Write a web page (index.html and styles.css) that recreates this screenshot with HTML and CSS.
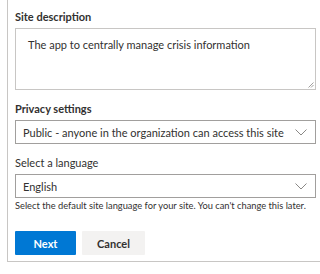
FILE: index.html
```html
<!DOCTYPE html>
<html lang="en">
<head>
    <meta charset="UTF-8">
    <title>Create site</title>
    <link rel="stylesheet" href="styles.css">
</head>
<body>
    <div class="panel">
        <div class="field">
            <label class="label strong" for="desc">Site description</label>
            <div class="textarea" id="desc">
                The app to centrally manage crisis information
                <svg class="grip" width="6" height="6" viewBox="0 0 6 6">
                    <path d="M5.5 0.5 L0.5 5.5 M5.5 3 L3 5.5" stroke="#8a8886" stroke-width="0.8" fill="none"/>
                </svg>
            </div>
        </div>

        <div class="field">
            <label class="label strong">Privacy settings</label>
            <div class="select">
                <span class="value">Public - anyone in the organization can access this site</span>
                <svg class="chevron" width="12" height="7" viewBox="0 0 12 7">
                    <path d="M0.5 0.5 L6 6 L11.5 0.5" stroke="#8a8886" stroke-width="1" fill="none"/>
                </svg>
            </div>
        </div>

        <div class="field">
            <label class="label">Select a language</label>
            <div class="select">
                <span class="value">English</span>
                <svg class="chevron" width="12" height="7" viewBox="0 0 12 7">
                    <path d="M0.5 0.5 L6 6 L11.5 0.5" stroke="#8a8886" stroke-width="1" fill="none"/>
                </svg>
            </div>
            <div class="hint">Select the default site language for your site. You can't change this later.</div>
        </div>

        <div class="actions">
            <button class="btn primary">Next</button>
            <button class="btn">Cancel</button>
        </div>
    </div>
</body>
</html>
```

FILE: styles.css
```css
body {
    margin: 0;
    font-family: Lato, "Open Sans", sans-serif;
    color: #323130;
    background: #fff;
}
.panel {
    margin-left: 7px;
    width: 301px;
    border: 1px solid #c8c6c4;
    border-top: none;
    padding: 9px 9px 6px 7px;
}
.field {
    margin-bottom: 11px;
}
.label {
    display: block;
    font-size: 11px;
    line-height: 16px;
    margin-bottom: 3px;
}
.strong {
    font-weight: 700;
}
.textarea {
    position: relative;
    height: 44px;
    border: 1px solid #c8c6c4;
    padding: 8px 12px;
    font-size: 11px;
    line-height: 16px;
}
.grip {
    position: absolute;
    right: 1px;
    bottom: 1px;
}
.select {
    display: flex;
    align-items: center;
    justify-content: space-between;
    height: 22px;
    border: 1px solid #a19f9d;
    padding: 0 8px 0 7px;
    font-size: 11px;
}
.value {
    white-space: nowrap;
    overflow: hidden;
}
.chevron {
    flex: none;
    margin-left: 8px;
}
.hint {
    font-size: 9.3px;
    line-height: 12px;
    margin-top: 2px;
    white-space: nowrap;
}
.actions {
    display: flex;
    gap: 6px;
    margin-top: 19px;
}
.btn {
    font-family: inherit;
    font-size: 11px;
    font-weight: 700;
    height: 24px;
    border: none;
    border-radius: 1px;
    background: #f3f2f1;
    color: #323130;
    padding: 0;
    width: 63px;
}
.primary {
    background: #0078d4;
    color: #fff;
    width: 61px;
}
```
